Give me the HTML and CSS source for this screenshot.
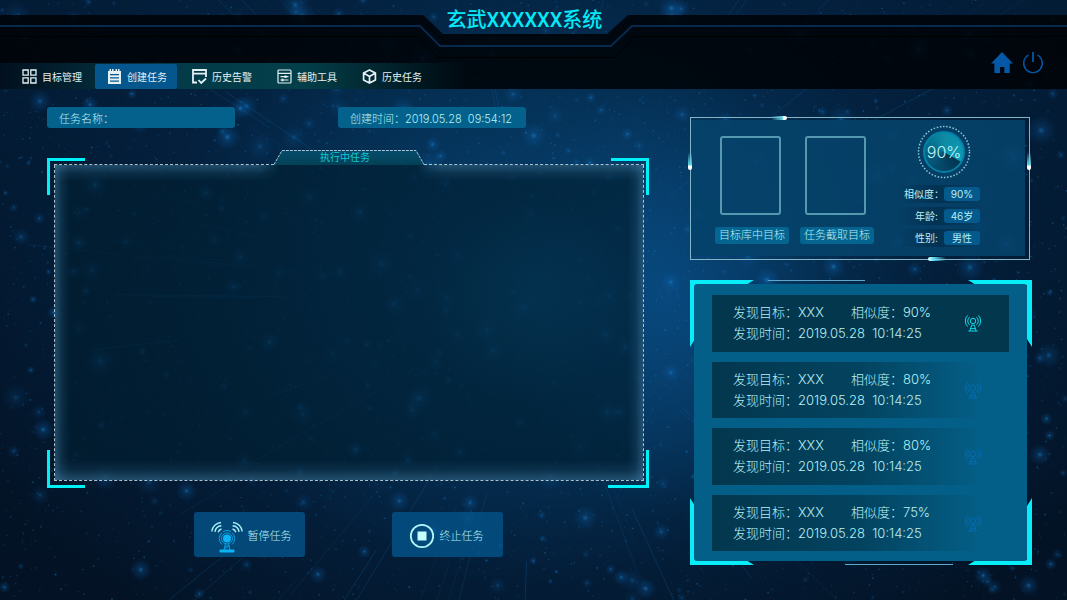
FILE: index.html
```html
<!DOCTYPE html>
<html lang="zh-CN">
<head>
<meta charset="utf-8">
<meta name="viewport" content="width=device-width, initial-scale=1">
<title>玄武XXXXXX系统</title>
<link rel="stylesheet" href="styles.css">
</head>
<body>
<svg class="sky" id="sky" viewBox="0 0 1067 600" preserveAspectRatio="xMidYMid slice" aria-hidden="true">
  <defs>
    <radialGradient id="star"><stop offset="0" stop-color="#1a8be0" stop-opacity=".9"/><stop offset=".25" stop-color="#0f6ab5" stop-opacity=".4"/><stop offset="1" stop-color="#0a5ca8" stop-opacity="0"/></radialGradient>
  </defs>
</svg>

<svg class="symbols" aria-hidden="true">
  <symbol id="tower" viewBox="0 0 18 18">
    <g fill="none" stroke="currentColor" stroke-width="1">
      <circle cx="9" cy="7" r="2.7"/>
      <path d="M5.6 10.9a5 5 0 0 1 0-7.8M12.4 10.9a5 5 0 0 0 0-7.8M3.6 12.6a8 8 0 0 1 0-11.2M14.4 12.6a8 8 0 0 0 0-11.2"/>
      <path d="M7.4 11.2h3.2M7.6 11.2 5.9 17M10.4 11.2 12.1 17M6.6 14.6h4.8M4.4 17h9.2"/>
    </g>
  </symbol>
</svg>

<header class="header">
  <svg class="banner" viewBox="0 0 1067 89" preserveAspectRatio="xMidYMin meet" aria-hidden="true">
    <path fill="#000206" fill-opacity=".86" d="M-3000 15H423L443 34H607L628 15H4000V89H-3000Z"/>
    <path fill="none" stroke="#06294d" stroke-width="2" d="M-3000 26H420L440 46H611L632 26H4000"/>
    <path fill="none" stroke="#000" stroke-width="1" d="M-3000 36.5H416L438 57.5H615L634 36.5H4000"/>
  </svg>
  <h1 class="title">玄武XXXXXX系统</h1>
  <div class="bar">
    <nav class="nav">
      <a class="nav-item" href="#targets">
        <svg class="nav-icon" viewBox="0 0 15 15"><g fill="none" stroke="currentColor" stroke-width="1.3"><path d="M1 1h5.2v5.2H1zM8.8 1H14v5.2H8.8zM1 8.8h5.2V14H1zM8.8 8.8H14V14H8.8z"/></g></svg>目标管理</a>
      <a class="nav-item is-active" href="#create" aria-current="page">
        <svg class="nav-icon" viewBox="0 0 15 15"><path fill="currentColor" fill-rule="evenodd" d="M1 2h1.5V0H4v2h1V0h1.5v2h2V0H10v2h1V0h1.5v2H14v13H1ZM3 5v1.3h9V5ZM3 8.2v1.3h9V8.2ZM3 11.4v1.3h9v-1.3Z"/></svg>创建任务</a>
      <a class="nav-item" href="#alarms">
        <svg class="nav-icon" viewBox="0 0 15 15"><g fill="none" stroke="currentColor" stroke-width="1.8"><path d="M5 13.5H1V1h13v7M1 4.7h13M6.5 11l2.7 3L14 9.5"/></g></svg>历史告警</a>
      <a class="nav-item" href="#tools">
        <svg class="nav-icon" viewBox="0 0 15 15"><g fill="none" stroke="currentColor" stroke-width="1.2"><rect x="1" y="1" width="13" height="13" rx="1"/><path d="M1 4.3h13M3.5 7.7h8M3.5 11h8"/><path stroke-width="2" d="M8.5 6.5v2.4M5.5 9.8v2.4"/></g></svg>辅助工具</a>
      <a class="nav-item" href="#history">
        <svg class="nav-icon" viewBox="0 0 15 15"><g fill="none" stroke="currentColor" stroke-width="1.7" stroke-linejoin="round"><path d="M7.5.9 13.4 4v7L7.5 14.1 1.6 11V4ZM1.6 4l5.9 3.4L13.4 4M7.5 7.4v6.7"/></g></svg>历史任务</a>
    </nav>
    <div class="tools">
      <button class="tool" type="button" aria-label="首页"><svg viewBox="0 0 22 22"><path fill="currentColor" d="M11 0 22 11.5H18.7V21H13.3V15H9V21H3.4V11.5H0Z"/></svg></button>
      <button class="tool" type="button" aria-label="退出"><svg viewBox="0 0 22 22"><g fill="none" stroke="currentColor" stroke-width="1.4"><path d="M6.4 3.2a9.3 9.3 0 1 0 9.2 0"/><path stroke-width="1.8" d="M11 0v10"/></g></svg></button>
    </div>
  </div>
</header>

<main class="main">
  <section class="task">
    <div class="fields">
      <label class="field">任务名称：<input class="field-input" type="text" name="task"></label>
      <p class="field"><time class="pre">创建时间：2019.05.28  09:54:12</time></p>
    </div>
    <div class="stage">
      <div class="stage-top">
        <span class="dash"></span>
        <div class="tab">
          <svg class="tab-shape" viewBox="0 0 150 15" aria-hidden="true">
            <defs><linearGradient id="tabFill" x2="0" y2="1"><stop offset="0" stop-color="#064c6c"/><stop offset="1" stop-color="#034156"/></linearGradient></defs>
            <path fill="url(#tabFill)" d="M0 15 8 .5H142L150 15Z"/>
            <path fill="none" stroke="#a9c3d0" stroke-dasharray="3 1" d="M0 14.5 8 .5H142L150 14.5"/>
          </svg>
          <h2 class="tab-text">执行中任务</h2>
        </div>
        <span class="dash"></span>
      </div>
      <div class="screen"></div>
    </div>
    <div class="actions">
      <button class="action" type="button">
        <svg class="action-icon" viewBox="0 0 32 32" aria-hidden="true">
          <g fill="none" stroke="#a9eef8" stroke-width="1.4"><path d="M.8 10.5A10 10 0 0 1 10 1.5M4 10.8a7 7 0 0 1 6.4-6M7.2 11.2A4.5 4.5 0 0 1 10.5 8M31.2 10.5A10 10 0 0 0 22 1.5M28 10.8a7 7 0 0 0-6.4-6M24.8 11.2A4.5 4.5 0 0 0 21.5 8"/></g>
          <g fill="none" stroke="#0a9fe0" stroke-width="1"><circle cx="16" cy="17.5" r="5.5"/><path d="M11 23.5a8 8 0 0 1 0-12M21 23.5a8 8 0 0 0 0-12M12 10.5a8 8 0 0 1 8 0"/><path d="M14.5 22 13 29M17.5 22 19 29M14 25h4M13 28l5-3"/></g>
          <circle cx="16" cy="17.5" r="4" fill="#0cb4f5"/><rect x="8.5" y="28.5" width="15" height="3" rx="1" fill="#0cb4f5"/>
        </svg>暂停任务</button>
      <button class="action" type="button">
        <svg class="action-icon action-icon--stop" viewBox="0 0 26 26" aria-hidden="true"><circle cx="13" cy="13" r="11.2" fill="none" stroke="#b4f5fb" stroke-width="1.8"/><rect x="8.5" y="8.5" width="9" height="9" fill="#c4ffff"/></svg>终止任务</button>
    </div>
  </section>

  <aside class="side">
    <section class="card">
      <i class="spark spark--top"></i><i class="spark spark--left"></i><i class="spark spark--right"></i><i class="spark spark--bottom"></i>
      <div class="card-body">
        <figure class="photo"><div class="photo-frame"></div><figcaption class="tag">目标库中目标</figcaption></figure>
        <figure class="photo"><div class="photo-frame"></div><figcaption class="tag">任务截取目标</figcaption></figure>
        <div class="match">
          <div class="gauge">
            <svg class="gauge-ring" viewBox="0 0 54 54" aria-hidden="true"><circle cx="27" cy="27" r="25.5" fill="none" stroke="#8ccbd9" stroke-width="1.5" stroke-dasharray="1.5 1.7"/></svg>
            <div class="gauge-dial">90%</div>
          </div>
          <dl class="stats">
            <div class="stat"><dt>相似度：</dt><dd>90%</dd></div>
            <div class="stat"><dt>年龄:</dt><dd>46岁</dd></div>
            <div class="stat"><dt>性别:</dt><dd>男性</dd></div>
          </dl>
        </div>
      </div>
    </section>

    <section class="alerts">
      <svg class="corner corner--tl" viewBox="0 0 64 67" aria-hidden="true"><path d="M0 0H64L56 5H5V59L0 67Z"/></svg>
      <svg class="corner corner--tr" viewBox="0 0 64 67" aria-hidden="true"><path d="M0 0H64L56 5H5V59L0 67Z"/></svg>
      <svg class="corner corner--bl" viewBox="0 0 64 67" aria-hidden="true"><path d="M0 0H64L56 5H5V59L0 67Z"/></svg>
      <svg class="corner corner--br" viewBox="0 0 64 67" aria-hidden="true"><path d="M0 0H64L56 5H5V59L0 67Z"/></svg>
      <ul class="alert-list">
        <li class="alert is-new"><div class="alert-text"><span>发现目标：XXX</span><span>相似度：90%</span><span class="wide pre">发现时间：2019.05.28  10:14:25</span></div><svg class="alert-icon" aria-hidden="true"><use href="#tower"/></svg></li>
        <li class="alert"><div class="alert-text"><span>发现目标：XXX</span><span>相似度：80%</span><span class="wide pre">发现时间：2019.05.28  10:14:25</span></div><svg class="alert-icon" aria-hidden="true"><use href="#tower"/></svg></li>
        <li class="alert"><div class="alert-text"><span>发现目标：XXX</span><span>相似度：80%</span><span class="wide pre">发现时间：2019.05.28  10:14:25</span></div><svg class="alert-icon" aria-hidden="true"><use href="#tower"/></svg></li>
        <li class="alert"><div class="alert-text"><span>发现目标：XXX</span><span>相似度：75%</span><span class="wide pre">发现时间：2019.05.28  10:14:25</span></div><svg class="alert-icon" aria-hidden="true"><use href="#tower"/></svg></li>
      </ul>
    </section>
  </aside>
</main>
<script src="sky.js"></script>
</body>
</html>
```

FILE: styles.css
```css
* { box-sizing: border-box; }

body {
  margin: 0;
  min-height: 100vh;
  display: flex;
  flex-direction: column;
  position: relative;
  font-family: Inter, "Noto Sans CJK SC", sans-serif;
  font-weight: 300;
  font-size: 11px;
  color: #b8f0f6;
  background:
    radial-gradient(ellipse 110px 100px at 50% 50%, rgba(14, 120, 180, .4), rgba(14, 120, 180, 0)),
    radial-gradient(ellipse 170px 220px at 63% 50%, rgba(12, 95, 165, .4), rgba(12, 95, 165, 0)),
    radial-gradient(ellipse 600px 480px at 51% 45%, #064474, rgba(5, 54, 94, .85) 35%, rgba(4, 38, 72, .5) 65%, rgba(3, 24, 48, 0)),
    linear-gradient(#031c36, #031224);
}

h1, h2, p, ul, dl, dd, figure { margin: 0; padding: 0; }
ul { list-style: none; }
button { font: inherit; color: inherit; border: 0; cursor: pointer; }
.pre { white-space: pre; }

.sky {
  position: absolute;
  inset: 0;
  width: 100%;
  height: 100%;
}
.symbols { position: absolute; width: 0; height: 0; }

/* Header */
.header { position: relative; overflow: hidden; }
.banner {
  position: absolute;
  inset: 0;
  width: 100%;
  height: 89px;
  overflow: visible;
}
.title {
  position: relative;
  height: 40px;
  padding-right: 18px;
  line-height: 40px;
  text-align: center;
  font-family: Roboto, "Noto Sans CJK SC", sans-serif;
  font-size: 20px;
  font-weight: 500;
  color: #06e9f6;
}
.bar {
  position: relative;
  height: 49px;
  display: flex;
  justify-content: space-between;
}
.nav {
  align-self: flex-end;
  display: flex;
  gap: 3px;
  height: 26px;
  padding: 1px 36px 0 10px;
  background: linear-gradient(90deg, rgba(2, 18, 34, .8), #033a49 35%, #033f49 65%, rgba(3, 50, 60, 0));
}
.nav-item {
  width: 82px;
  padding-left: 12px;
  display: flex;
  align-items: center;
  gap: 5px;
  border-radius: 2px;
  font-size: 10px;
  font-weight: 400;
  white-space: nowrap;
  color: #e3f1f5;
  text-decoration: none;
}
.nav-item.is-active { background: #04568c; }
.nav-icon { width: 15px; height: 15px; flex: none; }
.tools {
  display: flex;
  gap: 9px;
  padding: 12px 23px 0 0;
}
.tool { width: 22px; height: 22px; padding: 0; background: none; color: #0558a8; }
.tool svg { display: block; width: 100%; height: 100%; }

/* Page columns */
.main {
  position: relative;
  flex: 1;
  display: grid;
  grid-template-columns: 602fr 342fr;
  gap: 41px;
  padding: 18px 35px 35px 47px;
}
.task { display: flex; flex-direction: column; padding-bottom: 8px; }

.fields { display: flex; gap: 103px; }
.field {
  width: 188px;
  height: 21px;
  padding: 0 12px;
  display: flex;
  align-items: center;
  border-radius: 3px;
  white-space: nowrap;
  background: #04618c;
}
.field-input {
  flex: 1;
  min-width: 0;
  height: 21px;
  padding: 0;
  border: 0;
  outline: 0;
  background: none;
  font: inherit;
  color: inherit;
}

/* Video stage with corner brackets */
.stage {
  --c: linear-gradient(#00f0f8, #00f0f8);
  flex: 1;
  display: flex;
  flex-direction: column;
  margin-top: 30px;
  padding: 0 5px 7px 7px;
  background:
    var(--c) 0 0 / 38px 3px, var(--c) 0 0 / 3px 37px,
    var(--c) 100% 0 / 38px 3px, var(--c) 100% 0 / 3px 37px,
    var(--c) 0 100% / 38px 3px, var(--c) 0 100% / 3px 38px,
    var(--c) 100% 100% / 41px 3px, var(--c) 100% 100% / 3px 38px;
  background-repeat: no-repeat;
}
.stage-top { display: flex; align-items: flex-end; margin-top: -8px; }
.dash { flex: 1; border-top: 1px dashed #a9c3d0; }
.tab { position: relative; width: 150px; height: 15px; }
.tab-shape { position: absolute; inset: 0; width: 100%; height: 100%; overflow: visible; }
.tab-text {
  position: relative;
  padding-right: 8px;
  line-height: 15px;
  text-align: center;
  font-size: 10px;
  font-weight: 400;
  color: #10cbd6;
}
.screen {
  --g: rgba(75, 135, 175, .45), rgba(50, 110, 150, .18) 50%, rgba(40, 100, 140, 0);
  position: relative;
  flex: 1;
  border: 1px dashed #a9c3d0;
  border-top: 0;
  background:
    linear-gradient(0deg, var(--g)) 0 100% / 100% 20px,
    linear-gradient(90deg, var(--g)) 0 0 / 15px 100%,
    linear-gradient(270deg, var(--g)) 100% 0 / 15px 100%,
    linear-gradient(rgba(0, 30, 48, .68), rgba(0, 30, 48, .68));
  background-repeat: no-repeat;
}
.screen::before {
  content: "";
  position: absolute;
  inset: 0 0 auto;
  height: 17px;
  background: linear-gradient(180deg, var(--g));
  mask-image: linear-gradient(90deg, #000 calc(50% - 92px), transparent calc(50% - 68px), transparent calc(50% + 68px), #000 calc(50% + 92px));
}

.actions { display: flex; justify-content: center; gap: 87px; margin-top: 24px; }
.action {
  width: 111px;
  height: 45px;
  padding: 0 0 0 17px;
  display: flex;
  align-items: center;
  gap: 5px;
  border-radius: 3px;
  background: rgba(4, 84, 138, .8);
}
.action-icon { width: 32px; height: 32px; margin-top: 4px; }
.action-icon--stop { width: 26px; height: 26px; margin-top: 2px; }

/* Match card */
.side { display: flex; flex-direction: column; gap: 20px; padding-top: 10px; }
.card {
  position: relative;
  margin-right: 2px;
  padding: 2px 4px 3px 0;
  border: 1px solid #7fb5c4;
}
.card-body {
  height: 136px;
  display: flex;
  padding: 16px 45px 0 24px;
  background: rgba(6, 66, 106, .9);
}
.photo { display: flex; flex-direction: column; align-items: flex-start; gap: 12px; }
.photo-frame { width: 61px; height: 79px; margin-left: 5px; border: 2px solid #5599b0; border-radius: 3px; }
.photo + .photo { margin-left: 11px; }
.tag {
  padding: 0 4px;
  border-radius: 3px;
  line-height: 17px;
  white-space: nowrap;
  background: #056590;
}
.match { flex: 1; display: flex; flex-direction: column; align-items: flex-end; margin-top: -11px; }
.gauge { position: relative; width: 54px; height: 54px; margin-right: 9px; padding: 6px; }
.gauge-ring { position: absolute; inset: 0; }
.gauge-dial {
  width: 42px;
  height: 42px;
  border: 2px solid #0580a8;
  border-radius: 50%;
  line-height: 38px;
  display: flex;
  justify-content: center;
  font-size: 16px;
  color: #c2f6fb;
  background: conic-gradient(#0d8ba4, #0e9bb4 118deg, #033650 122deg, #044a6c 200deg, #066c8c 290deg, #0d8ba4);
}
.stats { display: grid; gap: 4px; margin-top: 6px; font-size: 10px; font-weight: 400; line-height: 14px; }
.stat {
  display: flex;
  align-items: center;
  justify-content: flex-end;
  height: 18px;
  padding-left: 8px;
  background: linear-gradient(90deg, rgba(2, 44, 74, 0), rgba(2, 44, 74, .7) 50%, rgba(2, 44, 74, 0));
}
.stat dt { padding-right: 6px; }
.stat:first-child dt { padding-right: 0; }
.stat dd {
  width: 36px;
  border-radius: 3px;
  text-align: center;
  background: #045a8c;
}
.spark { position: absolute; border-radius: 3px; }
.spark--top { left: 80px; top: -2px; width: 16px; height: 4px; background: linear-gradient(90deg, rgba(95, 208, 224, 0), #5fd0e0 70%, #fff 80%); }
.spark--bottom { left: 237px; bottom: -2px; width: 18px; height: 4px; background: linear-gradient(270deg, rgba(95, 224, 248, 0), #5fe0f8 70%, #dff); }
.spark--left { left: -3px; top: 34px; width: 4px; height: 18px; background: linear-gradient(rgba(95, 208, 224, 0), #5fd0e0 70%, #fff 80%); }
.spark--right { right: -2px; top: 34px; width: 4px; height: 18px; background: linear-gradient(rgba(95, 208, 224, 0), #5fd0e0 70%, #fff 80%); }

/* Alert list */
.alerts {
  position: relative;
  flex: 1;
  display: flex;
  padding: 4px 5px 4px 4px;
  background:
    linear-gradient(#5fa8cc, #5fa8cc) 78px 0 / 97px 1px no-repeat,
    linear-gradient(#5fa8cc, #5fa8cc) calc(100% - 79px) 100% / 108px 1px no-repeat;
}
.corner { position: absolute; width: 64px; height: 67px; fill: #08edf8; }
.corner--tl { left: 0; top: 0; }
.corner--tr { right: 0; top: 0; transform: scaleX(-1); }
.corner--bl { left: 0; bottom: 0; transform: scaleY(-1); }
.corner--br { right: 0; bottom: 0; transform: scale(-1); }
.alert-list {
  position: relative;
  flex: 1;
  display: flex;
  flex-direction: column;
  gap: 10px;
  padding: 11px 18px 10px;
  border-radius: 3px;
  background: #045f88;
}
.alert {
  flex: 1;
  display: flex;
  align-items: center;
  justify-content: space-between;
  padding: 0 27px 0 21px;
  font-size: 13px;
  line-height: 21px;
  background: linear-gradient(90deg, #03374e, rgba(3, 58, 82, .75) 50%, rgba(4, 95, 136, 0) 92%);
}
.alert.is-new { background: #03374e; }
.alert-text { display: grid; grid-template-columns: 118px auto; white-space: nowrap; }
.wide { grid-column: 1 / -1; }
.alert-icon { width: 18px; height: 18px; color: #056cb0; }
.is-new .alert-icon { color: #10dce8; }
```

FILE: sky.js
```js
// Scatters a repeatable field of stars and rays over the backdrop.
(function () {
  var NS = 'http://www.w3.org/2000/svg';
  var sky = document.getElementById('sky');
  var seed = 20190528;
  function rand() {
    seed = (seed * 16807) % 2147483647;
    return seed / 2147483647;
  }
  function add(name, attrs) {
    var node = document.createElementNS(NS, name);
    for (var key in attrs) node.setAttribute(key, attrs[key]);
    sky.appendChild(node);
  }
  for (var i = 0; i < 70; i++) {
    var a = rand() * Math.PI * 2;
    var r1 = 160 + rand() * 250;
    var r2 = r1 + 60 + rand() * 160;
    add('line', {
      x1: 537 + Math.cos(a) * r1, y1: 300 + Math.sin(a) * r1,
      x2: 537 + Math.cos(a) * r2, y2: 300 + Math.sin(a) * r2,
      stroke: '#1272b8', 'stroke-opacity': 0.08 + rand() * 0.2, 'stroke-width': 1
    });
  }
  for (i = 0; i < 4000; i++) {
    add('circle', {
      cx: rand() * 1067, cy: rand() * 600, r: 0.4 + rand() * 0.6,
      fill: '#1d80c8', 'fill-opacity': 0.1 + rand() * 0.3
    });
  }
  for (i = 0; i < 600; i++) {
    add('circle', {
      cx: rand() * 1067, cy: rand() * 600, r: 2 + Math.pow(rand(), 3) * 13,
      fill: 'url(#star)', 'fill-opacity': 0.3 + rand() * 0.45
    });
  }
})();
```
